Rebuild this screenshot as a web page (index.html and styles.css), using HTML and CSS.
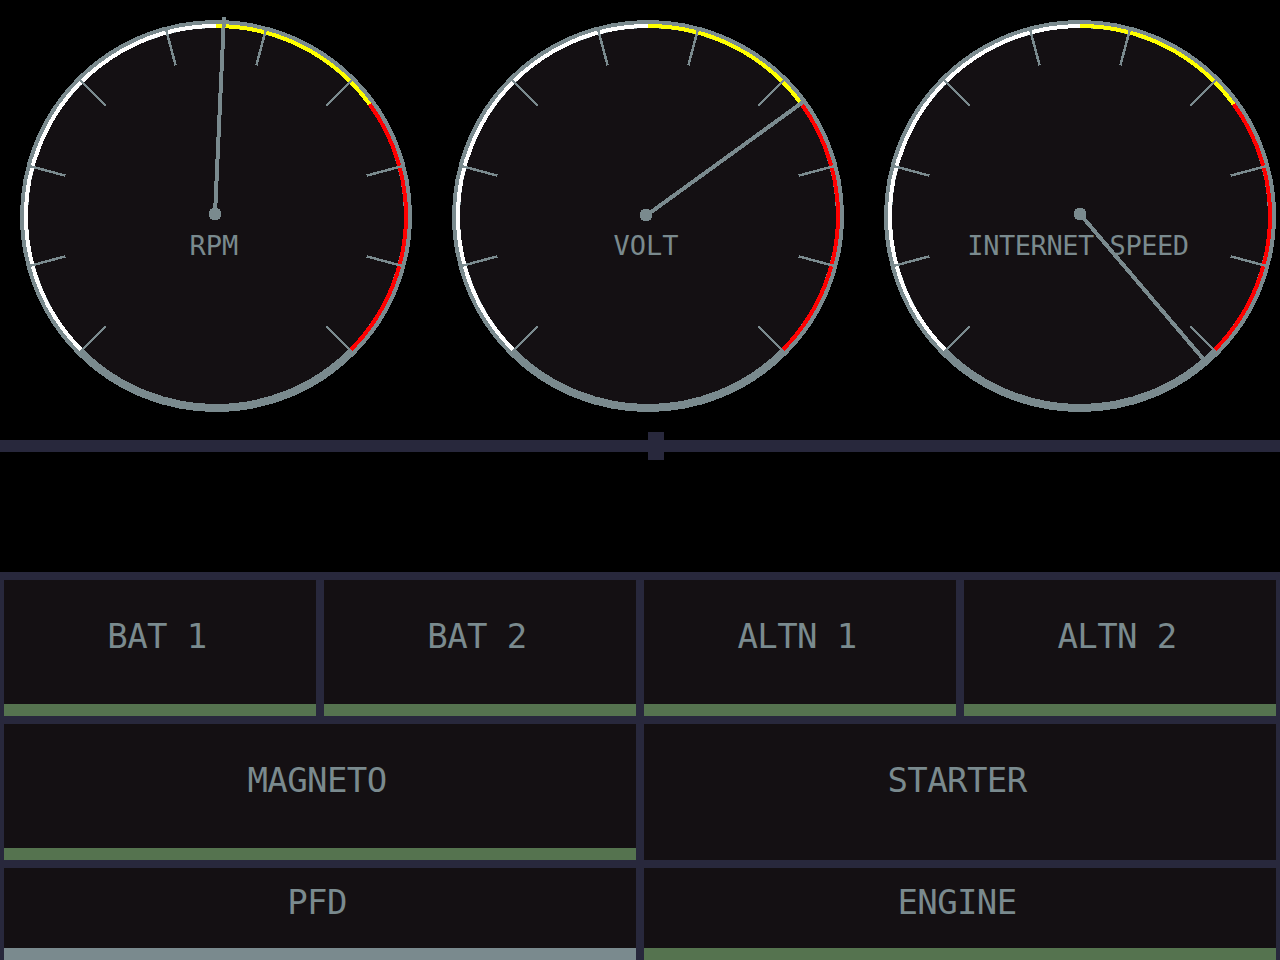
FILE: index.html
```html
<!DOCTYPE html>
<html lang="en">
<head>
<meta charset="utf-8">
<title>Engine Panel</title>
<link rel="stylesheet" href="styles.css">
</head>
<body>
<div class="screen">
  <div class="gauges">
    <svg class="gauge" viewBox="0 0 432 432" width="432" height="432">
      <circle class="face" cx="216" cy="216" r="192"/>
      <path class="arc arc-white" d="M81.65 350.35 A190 190 0 0 1 216 26"/>
      <path class="arc arc-yellow" d="M216 26 A190 190 0 0 1 369.71 104.32"/>
      <path class="arc arc-red" d="M369.71 104.32 A190 190 0 0 1 350.35 350.35"/>
      <g class="ticks">
        <line x1="165.8" y1="28.6" x2="175.63" y2="65.32"/>
        <line x1="266.2" y1="28.6" x2="256.37" y2="65.32"/>
        <line x1="78.8" y1="78.8" x2="105.69" y2="105.69"/>
        <line x1="353.2" y1="78.8" x2="326.31" y2="105.69"/>
        <line x1="28.6" y1="165.8" x2="65.32" y2="175.63"/>
        <line x1="403.4" y1="165.8" x2="366.68" y2="175.63"/>
        <line x1="28.6" y1="266.2" x2="65.32" y2="256.37"/>
        <line x1="403.4" y1="266.2" x2="366.68" y2="256.37"/>
        <line x1="78.8" y1="353.2" x2="105.69" y2="326.31"/>
        <line x1="353.2" y1="353.2" x2="326.31" y2="326.31"/>
      </g>
      <text class="gauge-label" x="214" y="255">RPM</text>
      <line class="needle" x1="215" y1="214" x2="224" y2="17"/>
      <circle class="hub" cx="215" cy="214" r="6.5"/>
    </svg>
    <svg class="gauge" viewBox="0 0 432 432" width="432" height="432">
      <circle class="face" cx="216" cy="216" r="192"/>
      <path class="arc arc-white" d="M81.65 350.35 A190 190 0 0 1 216 26"/>
      <path class="arc arc-yellow" d="M216 26 A190 190 0 0 1 369.71 104.32"/>
      <path class="arc arc-red" d="M369.71 104.32 A190 190 0 0 1 350.35 350.35"/>
      <g class="ticks">
        <line x1="165.8" y1="28.6" x2="175.63" y2="65.32"/>
        <line x1="266.2" y1="28.6" x2="256.37" y2="65.32"/>
        <line x1="78.8" y1="78.8" x2="105.69" y2="105.69"/>
        <line x1="353.2" y1="78.8" x2="326.31" y2="105.69"/>
        <line x1="28.6" y1="165.8" x2="65.32" y2="175.63"/>
        <line x1="403.4" y1="165.8" x2="366.68" y2="175.63"/>
        <line x1="28.6" y1="266.2" x2="65.32" y2="256.37"/>
        <line x1="403.4" y1="266.2" x2="366.68" y2="256.37"/>
        <line x1="78.8" y1="353.2" x2="105.69" y2="326.31"/>
        <line x1="353.2" y1="353.2" x2="326.31" y2="326.31"/>
      </g>
      <text class="gauge-label" x="214" y="255">VOLT</text>
      <line class="needle" x1="215" y1="215" x2="371" y2="102"/>
      <circle class="hub" cx="214" cy="215" r="6.5"/>
    </svg>
    <svg class="gauge" viewBox="0 0 432 432" width="432" height="432">
      <circle class="face" cx="216" cy="216" r="192"/>
      <path class="arc arc-white" d="M81.65 350.35 A190 190 0 0 1 216 26"/>
      <path class="arc arc-yellow" d="M216 26 A190 190 0 0 1 369.71 104.32"/>
      <path class="arc arc-red" d="M369.71 104.32 A190 190 0 0 1 350.35 350.35"/>
      <g class="ticks">
        <line x1="165.8" y1="28.6" x2="175.63" y2="65.32"/>
        <line x1="266.2" y1="28.6" x2="256.37" y2="65.32"/>
        <line x1="78.8" y1="78.8" x2="105.69" y2="105.69"/>
        <line x1="353.2" y1="78.8" x2="326.31" y2="105.69"/>
        <line x1="28.6" y1="165.8" x2="65.32" y2="175.63"/>
        <line x1="403.4" y1="165.8" x2="366.68" y2="175.63"/>
        <line x1="28.6" y1="266.2" x2="65.32" y2="256.37"/>
        <line x1="403.4" y1="266.2" x2="366.68" y2="256.37"/>
        <line x1="78.8" y1="353.2" x2="105.69" y2="326.31"/>
        <line x1="353.2" y1="353.2" x2="326.31" y2="326.31"/>
      </g>
      <text class="gauge-label gauge-label-long" x="214" y="255">INTERNET SPEED</text>
      <line class="needle" x1="216" y1="214" x2="341" y2="361"/>
      <circle class="hub" cx="216" cy="214" r="6.5"/>
    </svg>
  </div>

  <div class="slider">
    <div class="slider-track"></div>
    <div class="slider-thumb"></div>
  </div>

  <div class="panel">
    <div class="cell"><div class="cell-label">BAT 1</div><div class="cell-bar bar-on"></div></div>
    <div class="cell"><div class="cell-label">BAT 2</div><div class="cell-bar bar-on"></div></div>
    <div class="cell"><div class="cell-label">ALTN 1</div><div class="cell-bar bar-on"></div></div>
    <div class="cell"><div class="cell-label">ALTN 2</div><div class="cell-bar bar-on"></div></div>
    <div class="cell cell-wide"><div class="cell-label">MAGNETO</div><div class="cell-bar bar-on"></div></div>
    <div class="cell cell-wide"><div class="cell-label">STARTER</div><div class="cell-bar"></div></div>
    <div class="cell cell-wide"><div class="cell-label">PFD</div><div class="cell-bar bar-standby"></div></div>
    <div class="cell cell-wide"><div class="cell-label">ENGINE</div><div class="cell-bar bar-on"></div></div>
  </div>
</div>
</body>
</html>
```

FILE: styles.css
```css
html, body {
  margin: 0;
  padding: 0;
  background: #000000;
}

.screen {
  width: 1280px;
  height: 960px;
  overflow: hidden;
  background: #000000;
  font-family: "DejaVu Sans Mono", "Liberation Mono", monospace;
}

.gauges {
  display: flex;
  height: 432px;
  overflow: hidden;
}

.gauge {
  flex: 0 0 432px;
  display: block;
  shape-rendering: crispEdges;
}

.face {
  fill: #141013;
  stroke: #7a8a8e;
  stroke-width: 8;
}

.arc {
  fill: none;
  stroke-width: 4;
}

.arc-white { stroke: #ffffff; }
.arc-yellow { stroke: #ffff00; }
.arc-red { stroke: #ff0000; }

.ticks line {
  stroke: #7a8a8e;
  stroke-width: 2.5;
}

.needle {
  stroke: #7a8a8e;
  stroke-width: 4;
  stroke-linecap: butt;
}

.hub {
  fill: #7a8a8e;
}

.gauge-label {
  fill: #7a8a8e;
  font-family: "DejaVu Sans Mono", "Liberation Mono", monospace;
  font-size: 27px;
  text-anchor: middle;
}

.gauge-label-long {
  letter-spacing: -0.45px;
}

.slider {
  position: relative;
  margin-top: 8px;
  height: 12px;
}

.slider-track {
  height: 12px;
  background: #28283c;
}

.slider-thumb {
  position: absolute;
  left: 648px;
  top: -8px;
  width: 16px;
  height: 28px;
  background: #28283c;
}

.panel {
  margin-top: 120px;
  background: #28283c;
  padding: 8px 4px 0 4px;
  display: grid;
  grid-template-columns: repeat(4, 1fr);
  grid-template-rows: 136px 136px 92px;
  gap: 8px;
}

.cell {
  background: #141013;
  display: flex;
  flex-direction: column;
}

.cell-wide {
  grid-column: span 2;
}

.cell-label {
  flex: 1;
  display: flex;
  align-items: center;
  justify-content: center;
  padding-bottom: 12px;
  padding-right: 6px;
  color: #7a8a8e;
  font-size: 34px;
  line-height: 34px;
  letter-spacing: -0.6px;
  white-space: pre;
}

.cell-bar {
  height: 12px;
}

.bar-on {
  background: #55734f;
}

.bar-standby {
  background: #7a8a8e;
}
```
